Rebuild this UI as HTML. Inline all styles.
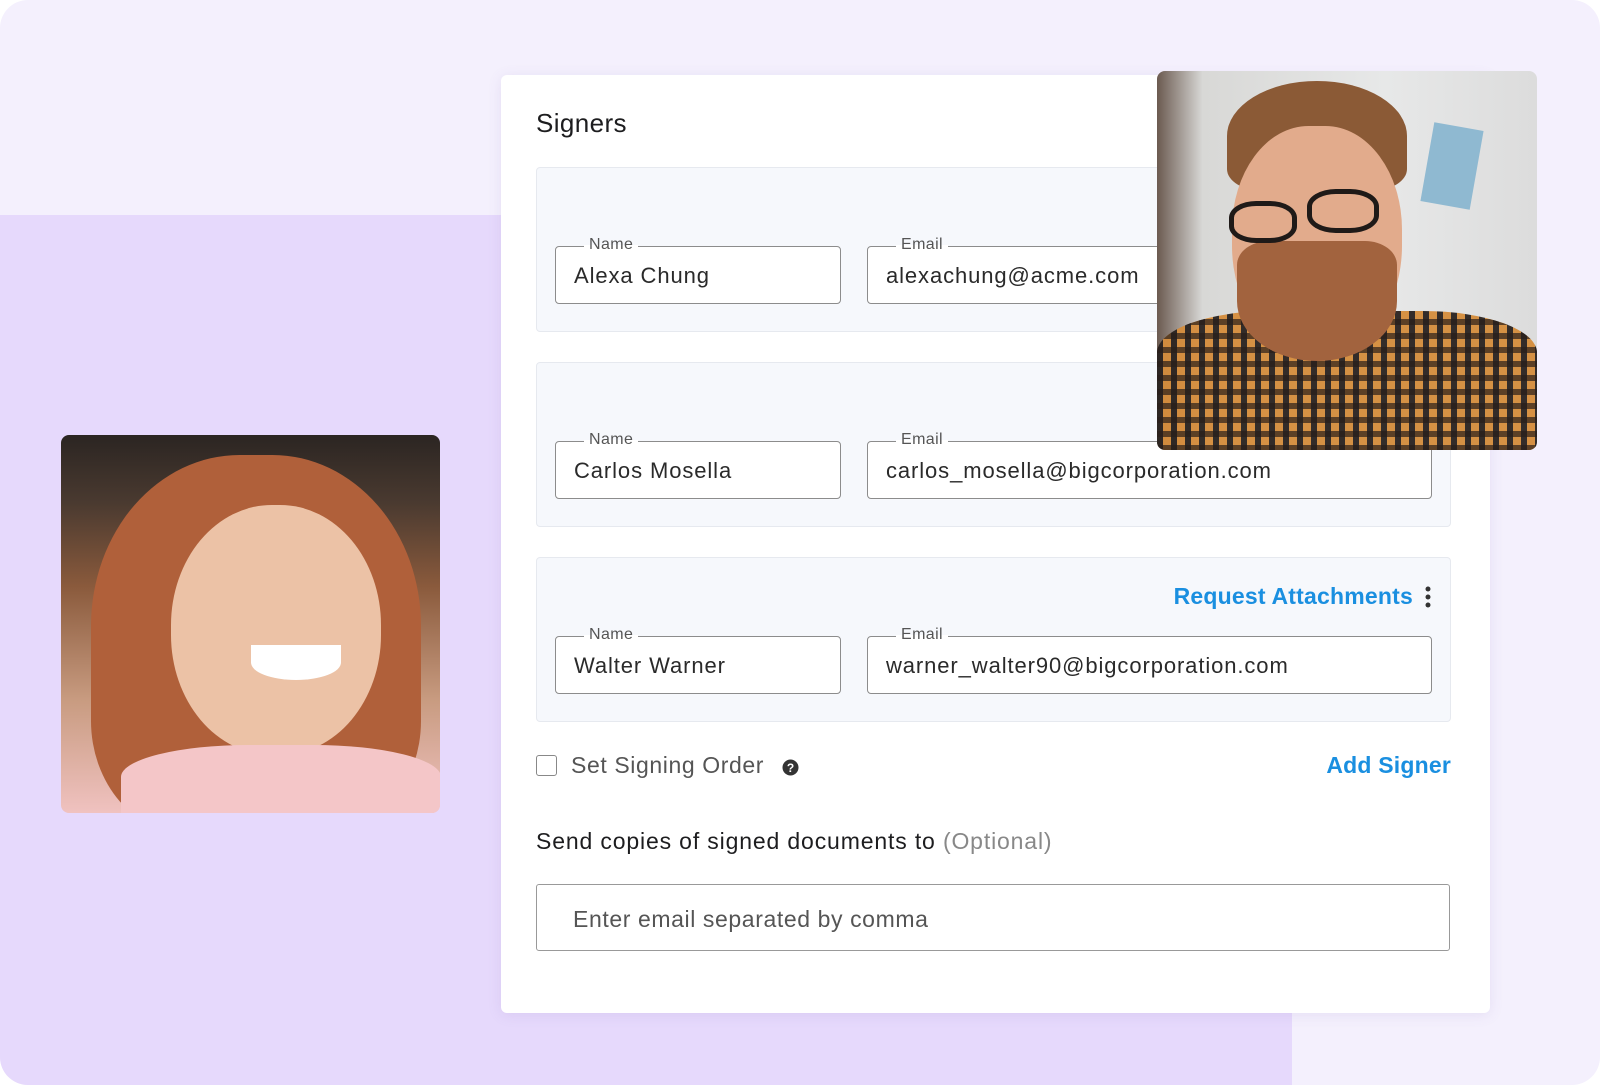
<!DOCTYPE html>
<html><head><meta charset="utf-8"><style>
*{margin:0;padding:0;box-sizing:border-box}
body{width:1600px;height:1085px;overflow:hidden;background:#fff;font-family:"Liberation Sans",sans-serif}
.canvas{position:absolute;left:0;top:0;width:1600px;height:1085px;background:#f4f0fd;border-radius:28px;overflow:hidden}
.lav{position:absolute;left:0;top:215px;width:1292px;height:870px;background:#e6d9fc}
.card{position:absolute;left:501px;top:75px;width:989px;height:938px;background:#fff;border-radius:6px;box-shadow:0 2px 14px rgba(120,100,170,.12)}
.ab{position:absolute}
.h{left:536px;top:108px;font-size:26px;color:#1d1d1f;letter-spacing:.4px}
.box{position:absolute;left:536px;width:915px;height:165px;background:#f6f8fc;border:1px solid #e6e9ef;border-radius:4px}
.in{position:absolute;height:58px;border:1.5px solid #8c8c8c;border-radius:4px;background:#fff}
.in .l{position:absolute;left:28px;top:-11px;background:linear-gradient(#f6f8fc 50%,#fff 50%);padding:0 5px;font-size:16px;color:#555;letter-spacing:.4px}
.in .v{position:absolute;left:18px;top:16px;font-size:22px;color:#2a2a2a;white-space:nowrap;letter-spacing:.9px}
.blue{color:#1a8fe0;font-weight:bold;font-size:23px;letter-spacing:.2px}
</style></head><body>
<div class="canvas">
<div class="lav"></div>
<div class="card"></div>
<div class="ab h">Signers</div>

<div class="box" style="top:167px"></div>
<div class="box" style="top:362px"></div>
<div class="box" style="top:557px"></div>

<div class="in" style="left:555px;top:246px;width:286px"><span class="l">Name</span><span class="v">Alexa Chung</span></div>
<div class="in" style="left:867px;top:246px;width:565px"><span class="l">Email</span><span class="v">alexachung@acme.com</span></div>
<div class="in" style="left:555px;top:441px;width:286px"><span class="l">Name</span><span class="v">Carlos Mosella</span></div>
<div class="in" style="left:867px;top:441px;width:565px"><span class="l">Email</span><span class="v">carlos_mosella@bigcorporation.com</span></div>
<div class="in" style="left:555px;top:636px;width:286px"><span class="l">Name</span><span class="v">Walter Warner</span></div>
<div class="in" style="left:867px;top:636px;width:565px"><span class="l">Email</span><span class="v">warner_walter90@bigcorporation.com</span></div>

<div class="ab blue" style="right:187px;top:583px">Request Attachments</div>
<svg class="ab" style="left:1424px;top:586px" width="8" height="22"><circle cx="4" cy="3" r="2.5" fill="#333"/><circle cx="4" cy="11" r="2.5" fill="#333"/><circle cx="4" cy="19" r="2.5" fill="#333"/></svg>

<div class="ab" style="left:536px;top:755px;width:21px;height:21px;border:1.5px solid #888;border-radius:3px;background:#fff"></div>
<div class="ab" style="left:571px;top:752px;font-size:23px;color:#555;letter-spacing:.6px">Set Signing Order</div>
<svg class="ab" style="left:782px;top:759px" width="17" height="17"><circle cx="8.5" cy="8.5" r="8" fill="#333"/><text x="8.5" y="13" font-size="12" font-weight="bold" fill="#fff" text-anchor="middle" font-family="Liberation Sans">?</text></svg>
<div class="ab blue" style="right:149px;top:752px">Add Signer</div>

<div class="ab" style="left:536px;top:828px;font-size:23px;color:#1d1d1f;letter-spacing:.85px">Send copies of signed documents to <span style="color:#888">(Optional)</span></div>
<div class="ab" style="left:536px;top:884px;width:914px;height:67px;border:1.5px solid #999;border-radius:3px"></div>
<div class="ab" style="left:573px;top:906px;font-size:23px;color:#555;letter-spacing:.6px">Enter email separated by comma</div>

<div class="ab" style="left:61px;top:435px;width:379px;height:378px;border-radius:8px;overflow:hidden;background:linear-gradient(180deg,#2b2522 0%,#4a3a30 18%,#8a5a3c 40%,#c89b80 70%,#f0c2c0 100%)">
<div class="ab" style="left:30px;top:20px;width:330px;height:380px;border-radius:45% 45% 30% 30%;background:#b0603a"></div>
<div class="ab" style="left:110px;top:70px;width:210px;height:250px;border-radius:48%;background:#ecc2a6"></div>
<div class="ab" style="left:190px;top:210px;width:90px;height:35px;border-radius:0 0 50% 50%;background:#fff"></div>
<div class="ab" style="left:60px;top:310px;width:320px;height:80px;border-radius:40% 40% 0 0;background:#f4c6c8"></div>
</div>

<div class="ab" style="left:1157px;top:71px;width:380px;height:379px;border-radius:8px;overflow:hidden;background:linear-gradient(90deg,#6b5a50 0%,#d8d8d6 12%,#e7e8e8 60%,#dcdcdc 100%)">
<div class="ab" style="left:270px;top:55px;width:50px;height:80px;background:#8fb9d1;transform:rotate(10deg)"></div>
<div class="ab" style="left:0;top:240px;width:380px;height:140px;border-radius:30% 30% 0 0;background:repeating-linear-gradient(90deg,#2a2320 0 6px,#d58d3c 6px 14px),#d58d3c;opacity:.95"></div>
<div class="ab" style="left:0;top:240px;width:380px;height:140px;border-radius:30% 30% 0 0;background:repeating-linear-gradient(0deg,rgba(40,30,25,.7) 0 6px,transparent 6px 14px)"></div>
<div class="ab" style="left:70px;top:10px;width:180px;height:110px;border-radius:50% 50% 20% 20%;background:#8b5a36"></div>
<div class="ab" style="left:75px;top:55px;width:170px;height:230px;border-radius:45% 45% 48% 48%;background:#e2ab8c"></div>
<div class="ab" style="left:80px;top:170px;width:160px;height:120px;border-radius:20% 20% 50% 50%;background:#a2633e"></div>
<div class="ab" style="left:72px;top:130px;width:68px;height:42px;border:5px solid #1f1a18;border-radius:40%"></div>
<div class="ab" style="left:150px;top:118px;width:72px;height:44px;border:5px solid #1f1a18;border-radius:40%"></div>
</div>
</div>
</body></html>
